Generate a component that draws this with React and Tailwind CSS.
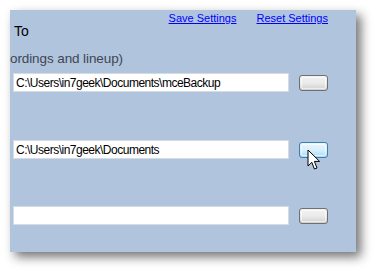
import React from 'react'

function WinButton({ hover }) {
  return (
    <div
      className={
        hover
          ? 'relative w-[29px] h-[16px] rounded-[3px] border border-[#3c7fb1] bg-gradient-to-b from-[#eaf6fd] via-[#d9f0fc] to-[#a7d9f5]'
          : 'relative w-[29px] h-[16px] rounded-[3px] border border-[#707070] bg-gradient-to-b from-[#f2f2f2] via-[#ebebeb] to-[#cfcfcf]'
      }
    >
      <div className="absolute inset-[1px] rounded-[2px] border border-white/60"></div>
    </div>
  )
}

function PathRow({ value, className, hover }) {
  return (
    <div className={'flex items-center pl-[3px] ' + className}>
      <div className="w-[276px] h-[19px] bg-white border border-[#d5dbe3] flex items-center pl-[2px] text-[12px] text-black font-['Liberation_Sans',sans-serif] tracking-[-0.5px] whitespace-nowrap overflow-hidden">
        {value}
      </div>
      <div className="ml-[10px] relative">
        <WinButton hover={hover} />
        {hover && (
          <svg className="absolute left-[8px] top-[7px]" width="14" height="22" viewBox="0 0 14 22">
            <path d="M1 1 L1 17 L4.8 13.3 L7.4 20 L10 19 L7.4 12.4 L12.6 12.4 Z" fill="white" stroke="black" strokeWidth="1" strokeLinejoin="round" />
          </svg>
        )}
      </div>
    </div>
  )
}

export default function App() {
  return (
    <div className="w-[374px] h-[271px] bg-white overflow-hidden pt-[10px] pl-[10px]">
      <div className="w-[346px] h-[242px] bg-[#b0c4de] shadow-[5px_5px_10px_rgba(0,0,0,0.55)] font-['Liberation_Sans',sans-serif]">
        <div className="flex justify-end gap-[20px] pr-[28px] pt-[2px] text-[11px] leading-[13px] h-[13px]">
          <span className="text-[#0000ff] underline">Save Settings</span>
          <span className="text-[#0000ff] underline">Reset Settings</span>
        </div>
        <div className="pl-[4px] text-[14px] leading-[16px] text-black h-[16px]">To</div>
        <div className="mt-[11px] text-[13.5px] leading-[18px] tracking-[-0.1px] text-[#3f4650] whitespace-nowrap">ordings and lineup)</div>
        <PathRow value="C:\Users\in7geek\Documents\mceBackup" className="mt-[5px]" />
        <PathRow value="C:\Users\in7geek\Documents" className="mt-[48px]" hover />
        <PathRow value="" className="mt-[47px]" />
      </div>
    </div>
  )
}
